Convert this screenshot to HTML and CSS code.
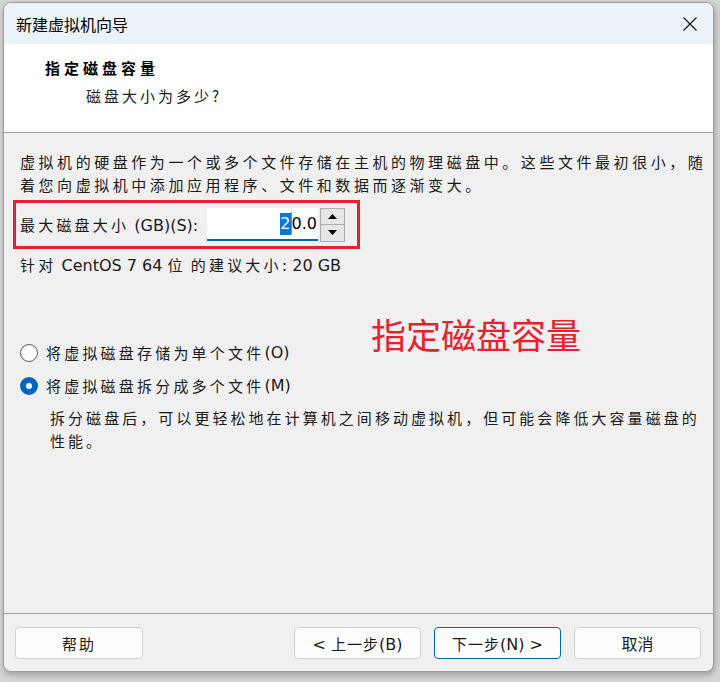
FILE: index.html
```html
<!DOCTYPE html>
<html lang="zh-CN">
<head>
<meta charset="utf-8">
<title>新建虚拟机向导</title>
<link rel="stylesheet" href="styles.css">
</head>
<body>
<div class="window">
  <div class="titlebar">
    <span class="title">新建虚拟机向导</span>
    <svg class="close" width="16" height="16" viewBox="0 0 16 16"><path d="M1.5 1.5 L14.5 14.5 M14.5 1.5 L1.5 14.5" stroke="#1a1a1a" stroke-width="1.3" fill="none"/></svg>
  </div>
  <div class="header">
    <div class="h-title">指定磁盘容量</div>
    <div class="h-sub">磁盘大小为多少?</div>
  </div>
  <div class="content">
    <p class="para">虚拟机的硬盘作为一个或多个文件存储在主机的物理磁盘中。这些文件最初很小，随<br>着您向虚拟机中添加应用程序、文件和数据而逐渐变大。</p>
    <div class="sizebox">
      <span class="label"><span class="cj">最大磁盘大小</span> (GB)(S):</span>
      <div class="spin">
        <div class="field"><span class="sel">2</span><span class="caret"></span>0.0</div>
        <div class="arrows">
          <div class="arr"><svg width="9" height="5" viewBox="0 0 9 5"><path d="M4.5 0 L9 5 L0 5 Z" fill="#000"/></svg></div>
          <div class="arr"><svg width="9" height="5" viewBox="0 0 9 5"><path d="M0 0 L9 0 L4.5 5 Z" fill="#000"/></svg></div>
        </div>
      </div>
    </div>
    <div class="rec"><span class="cj">针对</span> CentOS 7 64 <span class="cj">位</span> <span class="cj">的建议大小</span>: 20 GB</div>
    <div class="radio r1"><span class="dot"></span><span class="cj">将虚拟磁盘存储为单个文件</span>(O)</div>
    <div class="radio r2"><span class="dot on"></span><span class="cj">将虚拟磁盘拆分成多个文件</span>(M)</div>
    <p class="desc">拆分磁盘后，可以更轻松地在计算机之间移动虚拟机，但可能会降低大容量磁盘的<br>性能。</p>
    <div class="note">指定磁盘容量</div>
  </div>
  <div class="footer">
    <button class="btn help">帮助</button>
    <div class="nav">
      <button class="btn">&lt; <span class="cj">上一步</span>(B)</button>
      <button class="btn primary"><span class="cj">下一步</span>(N) &gt;</button>
      <button class="btn">取消</button>
    </div>
  </div>
</div>
</body>
</html>
```
FILE: styles.css
```css
html, body {
  margin: 0;
  padding: 0;
  background: #d4d4d4;
}
body {
  width: 720px;
  height: 682px;
  overflow: hidden;
  font-family: "DejaVu Sans", "Noto Sans CJK SC", sans-serif;
  color: #1a1a1a;
}
.window {
  margin: 2px 0 0 3px;
  width: 711px;
  height: 670px;
  box-sizing: border-box;
  border: 1px solid #9c9c9c;
  border-radius: 8px;
  overflow: hidden;
  background: #f0f0f0;
  display: flex;
  flex-direction: column;
  box-shadow: 1px 3px 6px rgba(0,0,0,0.25);
  position: relative;
}
.titlebar {
  height: 41px;
  flex: none;
  background: #eaf3f8;
  display: flex;
  align-items: center;
  justify-content: space-between;
  padding: 0 15px 0 12px;
}
.title {
  font-family: "Noto Sans CJK SC", sans-serif;
  font-size: 16px;
  color: #000;
}
.close { display: block; }
.header {
  height: 75px;
  flex: none;
  background: #fff;
  border-bottom: 1px solid #a0a0a0;
  padding-top: 13px;
}
.h-title {
  font-family: "Noto Sans CJK SC", sans-serif;
  font-weight: 700;
  font-size: 15px;
  line-height: 22px;
  letter-spacing: 4px;
  padding-left: 41px;
  color: #000;
}
.h-sub {
  font-family: "Noto Sans CJK SC", sans-serif;
  font-size: 15px;
  line-height: 22px;
  letter-spacing: 3px;
  padding-left: 82px;
  margin-top: 6px;
  color: #222;
}
.content {
  flex: 1;
  padding: 17px 0 0 16px;
  position: relative;
  font-size: 16px;
}
.para, .desc {
  margin: 0;
  font-family: "Noto Sans CJK SC", sans-serif;
  font-size: 15px;
  line-height: 23px;
  white-space: nowrap;
}
.para { letter-spacing: 3.55px; }
.desc { letter-spacing: 3.05px; }
.cj {
  font-family: "Noto Sans CJK SC", sans-serif;
  font-size: 15px;
  letter-spacing: 3.2px;
}
.sizebox {
  margin: 4px 0 0 -7px;
  width: 347px;
  height: 49px;
  box-sizing: border-box;
  border: 3px solid #e8202a;
  display: flex;
  align-items: center;
  padding-left: 4px;
}
.label {
  white-space: nowrap;
  width: 187px;
  flex: none;
}
.spin {
  display: flex;
  align-items: flex-start;
  gap: 2px;
}
.field {
  width: 111px;
  height: 33px;
  box-sizing: border-box;
  background: #fff;
  border-bottom: 2px solid #0067c0;
  font-size: 16px;
  line-height: 31px;
  text-align: right;
  padding-right: 1px;
  color: #000;
}
.sel {
  background: #0078d7;
  color: #fff;
  display: inline-block;
  line-height: 22px;
}
.caret {
  display: inline-block;
  width: 1px;
  height: 22px;
  background: #f07800;
  vertical-align: -5px;
}
.arrows {
  width: 25px;
  height: 34px;
  box-sizing: border-box;
  border: 1px solid #adadad;
  background: #e6e6e6;
  display: flex;
  flex-direction: column;
}
.arr {
  flex: 1;
  display: flex;
  align-items: center;
  justify-content: center;
}
.arr + .arr { border-top: 1px solid #adadad; }
.arr svg { display: block; }
.rec {
  margin-top: 4px;
  line-height: 23px;
  white-space: nowrap;
}
.radio {
  display: flex;
  align-items: center;
  line-height: 23px;
  white-space: nowrap;
}
.r1 { margin-top: 64px; }
.r2 { margin-top: 10px; }
.dot {
  width: 18px;
  height: 18px;
  box-sizing: border-box;
  border: 1px solid #5a5a5a;
  border-radius: 50%;
  background: #fff;
  margin-right: 8px;
  flex: none;
}
.dot.on {
  border: 6px solid #0067c0;
  background: #fff;
}
.desc {
  margin-top: 9px;
  padding-left: 30px;
}
.note {
  position: absolute;
  left: 367px;
  top: 181px;
  font-family: "Noto Sans CJK SC", sans-serif;
  font-size: 35px;
  line-height: 40px;
  letter-spacing: 0;
  color: #e8202a;
}
.footer {
  flex: none;
  height: 58px;
  box-sizing: border-box;
  border-top: 1px solid #a0a0a0;
  display: flex;
  align-items: flex-start;
  justify-content: space-between;
  padding: 13px 12px 0 11px;
}
.nav {
  display: flex;
  gap: 13px;
}
.btn {
  width: 127px;
  height: 32px;
  box-sizing: border-box;
  background: #fdfdfd;
  border: 1px solid #d0d0d0;
  border-radius: 4px;
  font-family: "DejaVu Sans", "Noto Sans CJK SC", sans-serif;
  font-size: 16px;
  color: #1a1a1a;
  padding: 0;
}
.btn .cj { letter-spacing: 1px; font-size: 15px; }
.btn.help {
  width: 128px;
  font-family: "Noto Sans CJK SC", sans-serif;
  font-size: 15px;
  letter-spacing: 2px;
}
.btn.primary {
  border-color: #0067c0;
}
```
